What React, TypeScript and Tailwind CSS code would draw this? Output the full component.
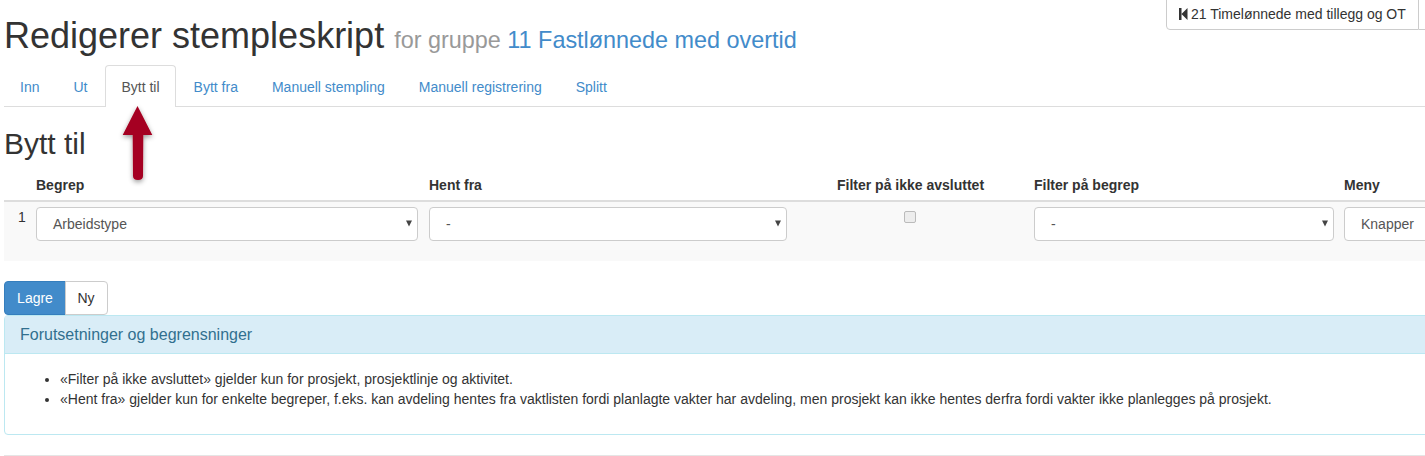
const tabs = ["Inn", "Ut", "Bytt til", "Bytt fra", "Manuell stempling", "Manuell registrering", "Splitt"];

function Select({ label, className }: { label: string; className: string }) {
  return (
    <div className={`relative flex h-[34px] shrink-0 items-center rounded border border-[#ccc] bg-white pl-4 text-[14px] text-[#555] ${className}`}>
      <span>{label}</span>
      <svg className="absolute right-[5px] top-[12px]" width="6" height="7" viewBox="0 0 6 7">
        <path d="M0 0.5h6L3 6.5z" fill="#444" />
      </svg>
    </div>
  );
}

export default function App() {
  return (
    <div className="relative h-[456px] w-[1425px] overflow-hidden bg-white text-[14px] leading-[20px] text-[#333]" style={{ fontFamily: '"Liberation Sans", Arial, sans-serif' }}>
      <div className="float-right -mt-px flex h-[31px] w-[259px] shrink-0 overflow-hidden">
        <div className="flex w-[253px] shrink-0 items-center rounded-bl border border-[#ccc] bg-white pb-[1px] pl-[12px]">
          <svg width="9" height="12" viewBox="0 0 9 12" className="mr-[3px]">
            <path d="M0 0h2.5v12H0zM8.5 0v12L2.5 6z" fill="#333" />
          </svg>
          <span>21 Timelønnede med tillegg og OT</span>
        </div>
        <div className="w-[20px] shrink-0 border-y border-[#ccc]" />
      </div>

      <div className="pl-[4px]">
        <h1 className="pt-[16px] text-[36px] leading-[40px] font-normal">
          Redigerer stempleskript{" "}
          <span className="text-[23.4px] text-[#999]">for gruppe </span>
          <a className="text-[23.4px] text-[#428bca]">11 Fastlønnede med overtid</a>
        </h1>

        <nav className="mt-[5px] flex h-[42px] border-b border-[#ddd]">
          {tabs.map((tab) => (
            <div
              key={tab}
              className={
                tab === "Bytt til"
                  ? "mr-[2px] h-[42px] rounded-t border border-b-0 border-[#ddd] bg-white px-[15px] pt-[11px] text-[#555]"
                  : "mr-[2px] px-[16px] pt-[12px] text-[#428bca]"
              }
            >
              {tab}
            </div>
          ))}
        </nav>

        <h2 className="mt-[20px] text-[30px] leading-[33px] font-normal">Bytt til</h2>

        <div className="mt-[15px] w-[1500px]">
          <div className="flex h-[27px] items-start border-b-2 border-[#ddd] pl-[32px] font-bold">
            <div className="w-[393px]">Begrep</div>
            <div className="w-[358px]">Hent fra</div>
            <div className="w-[247px] pl-[50px]">Filter på ikke avsluttet</div>
            <div className="w-[310px]">Filter på begrep</div>
            <div>Meny</div>
          </div>
          <div className="flex h-[59px] items-start bg-[#f9f9f9] pt-[5px]">
            <div className="w-[32px] shrink-0 pl-[14px] text-[14px] leading-[20px]">1</div>
            <Select label="Arbeidstype" className="w-[382px]" />
            <Select label="-" className="ml-[11px] w-[358px]" />
            <div className="flex w-[247px] shrink-0 justify-center pt-[4px] pr-[1px]">
              <div className="h-[12px] w-[12px] rounded-[2px] border border-[#bbb] bg-[#ededed]" />
            </div>
            <Select label="-" className="w-[300px]" />
            <div className="ml-[10px] flex h-[34px] w-[120px] shrink-0 items-center rounded border border-[#ccc] bg-white pl-4 text-[#555]">Knapper</div>
          </div>
        </div>

        <div className="mt-[20px] flex h-[34px]">
          <div className="flex w-[62px] items-center justify-center rounded-l border border-[#357ebd] bg-[#428bca] text-white">Lagre</div>
          <div className="-ml-px flex w-[43px] items-center justify-center rounded-r border border-[#ccc] bg-white pr-[1px]">Ny</div>
        </div>

        <div className="h-[120px] w-[1500px] rounded border border-[#bce8f1]">
          <div className="flex h-[38px] items-center border-b border-[#bce8f1] bg-[#d9edf7] pl-[15px] text-[16px] text-[#31708f]">
            Forutsetninger og begrensninger
          </div>
          <ul className="list-disc pl-[55px] pt-[15px] leading-[20px]">
            <li>«Filter på ikke avsluttet» gjelder kun for prosjekt, prosjektlinje og aktivitet.</li>
            <li>«Hent fra» gjelder kun for enkelte begreper, f.eks. kan avdeling hentes fra vaktlisten fordi planlagte vakter har avdeling, men prosjekt kan ikke hentes derfra fordi vakter ikke planlegges på prosjekt.</li>
          </ul>
        </div>

        <div className="mt-[20px] border-t border-[#e5e5e5]" />
      </div>

      <svg className="absolute left-[118px] top-[100px]" width="40" height="90" viewBox="0 0 40 90">
        <defs>
          <filter id="arrowShadow" x="-50%" y="-20%" width="200%" height="150%">
            <feDropShadow dx="0" dy="2" stdDeviation="2.5" floodColor="#000" floodOpacity="0.4" />
          </filter>
        </defs>
        <path d="M19.5 6 L34.3 35 L25.3 35 L25 76 Q25 80 20 80 Q15 80 15 76 L14.7 35 L4.7 35 Z" fill="#a50021" filter="url(#arrowShadow)" />
      </svg>
    </div>
  );
}
